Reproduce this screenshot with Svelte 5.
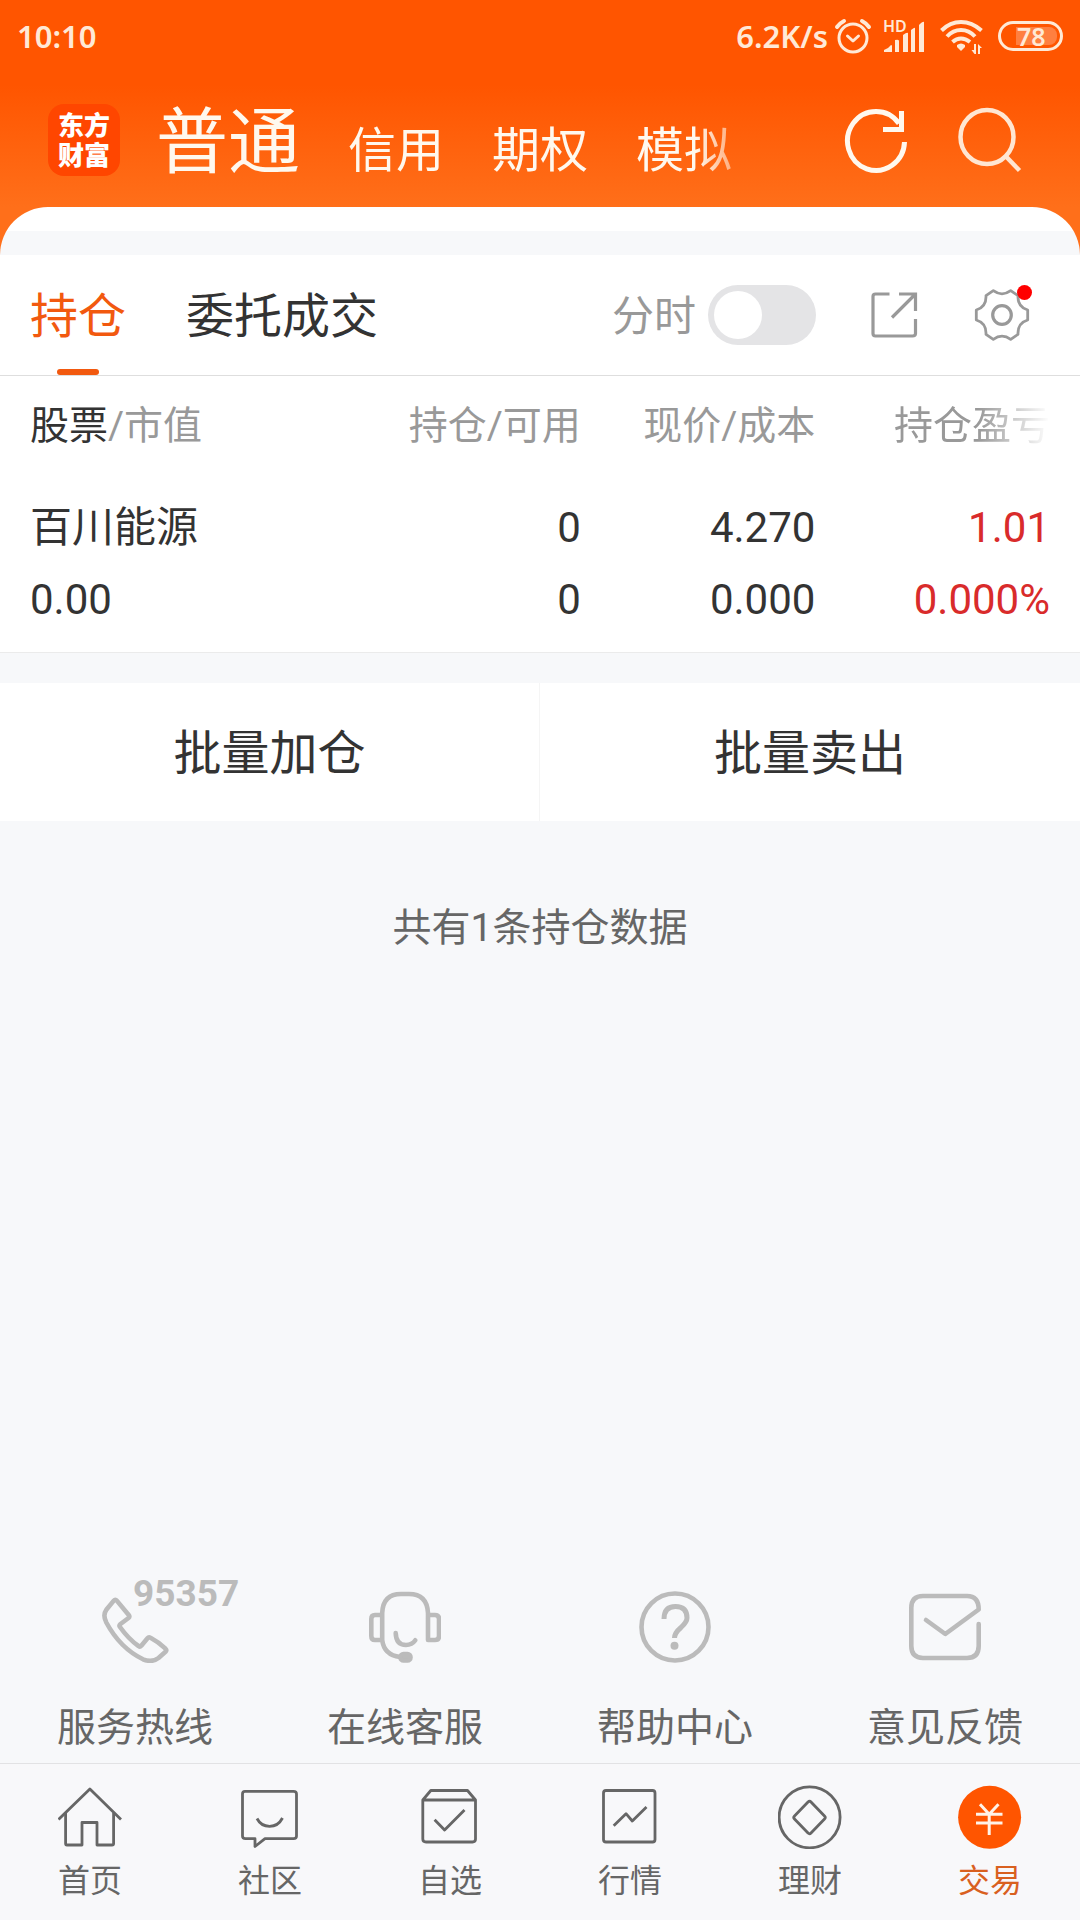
<script lang="ts">
	const accounts = ['普通', '信用', '期权', '模拟'];

	const holdings = [
		{
			name: '百川能源',
			value: '0.00',
			amount: '0',
			available: '0',
			price: '4.270',
			cost: '0.000',
			profit: '1.01',
			ratio: '0.000%'
		}
	];

	const services = [
		{ id: 'hotline', label: '服务热线' },
		{ id: 'chat', label: '在线客服' },
		{ id: 'help', label: '帮助中心' },
		{ id: 'feedback', label: '意见反馈' }
	];

	const tabs = [
		{ id: 'home', label: '首页' },
		{ id: 'community', label: '社区' },
		{ id: 'watchlist', label: '自选' },
		{ id: 'market', label: '行情' },
		{ id: 'wealth', label: '理财' },
		{ id: 'trade', label: '交易' }
	];

	let account = $state('普通');
	let view = $state('持仓');
	let currentTab = $state('trade');
	let intraday = $state(false);
</script>

<div class="page">
	<div class="status-bar">
		<time>10:10</time>
		<div class="status-icons">
			<span class="speed">6.2K/s</span>
			<svg class="alarm" viewBox="0 0 40 40" aria-hidden="true">
				<g fill="none" stroke="currentColor" stroke-width="3" stroke-linecap="round">
					<circle cx="20" cy="22" r="14" />
					<path d="M14.500 20l5.500 5 5.500-5" stroke-linejoin="round" />
					<path d="M4 11q3-4 7-6M36 11q-3-4-7-6" stroke-width="4" />
				</g>
			</svg>
			<svg class="signal" viewBox="0 0 44 36" aria-hidden="true">
				<text x="0" y="14">HD</text>
				<path
					fill="currentColor"
					d="M1 32q4-1 7-5q1 0 1 1v6H1zM12 22q4-1 4 1v11h-4zM20 17q4-3 5-2v19h-5zM28 12q4-3 4-2v24h-4zM36 7q4-4 5-3v30h-5z"
				/>
			</svg>
			<svg class="wifi" viewBox="0 0 44 38" aria-hidden="true">
				<g fill="none" stroke="currentColor" stroke-width="4">
					<path d="M1.500 13.500Q10 5 21 5t20.500 8.500" />
					<path d="M7 19.500Q13 13 21 13t14 6.500" />
					<path d="M12.500 25Q16.500 21.500 21 21.500t9 3.500" />
				</g>
				<path fill="currentColor" d="M17 28q4-3 8 0v2l-4 4-4-4z" />
				<path fill="currentColor" d="M36 27v10h-1.500l-3-4h2.500v-6zM38 37V27l4 4h-2v6z" />
			</svg>
			<span class="battery"><span>78</span></span>
		</div>
	</div>

	<header>
		<div class="logo">东方财富</div>
		<nav class="accounts">
			{#each accounts as item}
				<button class:current={account === item} onclick={() => (account = item)}>{item}</button>
			{/each}
		</nav>
		<button class="refresh" aria-label="刷新">
			<svg viewBox="0 0 68 68" aria-hidden="true">
				<g fill="none" stroke="currentColor" stroke-width="5">
					<path d="M62.500 36A28.500 29.500 0 1 1 57 17.500" />
					<path d="M41 23.500h18.500V5" />
				</g>
			</svg>
		</button>
		<button class="search" aria-label="搜索">
			<svg viewBox="0 0 68 68" aria-hidden="true">
				<g fill="none" stroke="currentColor" stroke-width="4.500">
					<ellipse cx="31" cy="31" rx="26.500" ry="27" />
					<path d="M50 50.500l13.500 14" />
				</g>
			</svg>
		</button>
	</header>

	<main>
		<div class="toolbar">
			<div class="views">
				{#each ['持仓', '委托成交'] as item}
					<button class:current={view === item} onclick={() => (view = item)}>{item}</button>
				{/each}
			</div>
			<label class="intraday">
				<span>分时</span>
				<input type="checkbox" role="switch" bind:checked={intraday} />
			</label>
			<button class="share" aria-label="分享">
				<svg viewBox="0 0 48 48" aria-hidden="true">
					<g fill="none" stroke="currentColor" stroke-width="3.200">
						<path d="M19.500 3H5.500Q3 3 3 5.500v37Q3 45 5.500 45h37q3 0 3-2.500V28" />
						<path d="M29 3h16.500v17M45.500 3L22 26.500" />
					</g>
				</svg>
			</button>
			<button class="settings" aria-label="设置">
				<svg viewBox="0 0 56 56" aria-hidden="true">
					<g fill="none" stroke="currentColor" stroke-width="2.800" stroke-linejoin="round">
						<path
							d="M12 8.700L19.300 3.700Q28 10 36.700 3.700L44 8.700Q43.500 20 53.700 23V33Q43.500 36 44 47.300L36.700 52.300Q28 46 19.300 52.300L12 47.300Q12.500 36 2.300 33V23Q12.500 20 12 8.700z"
						/>
						<circle cx="28" cy="28" r="9.300" stroke-width="3.200" />
					</g>
				</svg>
				<i class="dot"></i>
			</button>
		</div>

		<table>
			<thead>
				<tr>
					<th scope="col"><b>股票</b>/市值</th>
					<th scope="col">持仓/可用</th>
					<th scope="col">现价/成本</th>
					<th scope="col" class="fade">持仓盈亏</th>
				</tr>
			</thead>
			<tbody>
				{#each holdings as row}
					<tr>
						<td>{row.name}<br />{row.value}</td>
						<td>{row.amount}<br />{row.available}</td>
						<td>{row.price}<br />{row.cost}</td>
						<td class="up">{row.profit}<br />{row.ratio}</td>
					</tr>
				{/each}
			</tbody>
		</table>

		<div class="batch">
			<button>批量加仓</button>
			<button>批量卖出</button>
		</div>

		<p class="summary">共有{holdings.length}条持仓数据</p>

		<div class="services">
			{#each services as service}
				<a href="#{service.id}">
					<span class="service-icon">
						<svg viewBox="0 0 72 72" aria-hidden="true">
							<g
								fill="none"
								stroke="currentColor"
								stroke-width="4.600"
								stroke-linecap="round"
								stroke-linejoin="round"
							>
								{#if service.id === 'hotline'}
									<path
										d="M14.800 9.600Q16.300 7.800 17.800 9.600L29.700 24Q31 25.700 29.500 27L21.500 33Q19.800 34.500 21 36Q29.500 48 39.500 55Q41 56.200 42.300 54.800L48.500 47.300Q49.700 45.800 51.500 46.800Q59.500 51 66.500 57.700Q68 59.300 66.500 60.800L59.500 67Q53 72 44 68.300Q21 57 7.300 31.500Q3.500 24 7.300 18.800z"
									/>
								{:else if service.id === 'chat'}
									<path
										d="M13.200 49V22Q14 3 32 3H40Q58 3 59 22V49H66Q70 49 70 45V28Q70 24 66 24H59M13.200 24H6Q2.300 24 2.300 28V45Q2.300 49 6 49H13.200Q15 64 31 66"
									/>
									<path d="M26.700 42Q27 54 37 54Q43 54 46.300 49.300" />
									<rect x="31.500" y="63" width="10" height="6.500" rx="3" fill="currentColor" />
								{:else if service.id === 'help'}
									<circle cx="36" cy="36" r="33.500" />
									<path
										d="M25 28Q25 15.500 36.500 15.500T48 27Q48 31 42 36.500Q35.500 42 35.500 47"
										stroke-width="5"
										stroke-linecap="butt"
									/>
									<circle cx="35.500" cy="54.700" r="4" fill="currentColor" stroke="none" />
								{:else}
									<path
										d="M69.700 33V55Q69.700 67 58 67H14Q2.300 67 2.300 55V17Q2.300 5 14 5H58Q69.700 5 69.700 18.500L36.300 43L17 29"
									/>
								{/if}
							</g>
						</svg>
						{#if service.id === 'hotline'}
							<em>95357</em>
						{/if}
					</span>
					{service.label}
				</a>
			{/each}
		</div>
	</main>

	<nav class="tab-bar">
		{#each tabs as tab}
			<button class:current={currentTab === tab.id} onclick={() => (currentTab = tab.id)}>
				<svg viewBox="0 0 64 64" aria-hidden="true">
					<g fill="none" stroke="currentColor" stroke-width="2.800" stroke-linejoin="round">
						{#if tab.id === 'home'}
							<path d="M.5 34.500L31.900 4L63 34.500" />
							<path d="M7.600 28V58.500Q7.600 60 9 60H24V37.500H39V60H54Q55.600 60 55.600 58.500V28" />
						{:else if tab.id === 'community'}
							<path
								d="M7 6.300H55.500Q58.500 6.300 58.500 9V51Q58.500 53.700 55.500 53.700H27L17 61.500V53.700H7.500Q4.500 53.700 4.500 51V9Q4.500 6.300 7 6.300z"
							/>
							<path d="M19 33.500Q23 41.300 31.600 41.300T44.500 33" />
						{:else if tab.id === 'watchlist'}
							<path
								d="M4.800 15L12.800 5.500H49.500L57.500 15V54Q57.500 57 54.500 57H8Q4.800 57 4.800 54zH57.500"
							/>
							<path d="M16.600 34.700L26.600 45L46.500 25" />
						{:else if tab.id === 'market'}
							<rect x="5.500" y="5.500" width="51.500" height="51.500" rx="2.500" />
							<path d="M15.700 40.700L28 28.700L34.300 36L48.500 22" />
						{:else if tab.id === 'wealth'}
							<circle cx="31.600" cy="32.300" r="30.500" />
							<path
								d="M30 17Q31.600 15.500 33 17L46.500 31Q48 32.500 46.500 34L33 48Q31.600 49.500 30 48L16.500 34Q15 32.500 16.500 31z"
							/>
						{:else}
							<circle cx="31.600" cy="32.300" r="31.500" fill="#ff5500" stroke="none" />
							<path
								stroke="#fff3e8"
								stroke-width="3"
								d="M22 19.300L31.200 29.300L40.500 19.300M31.200 29.300V50M18 29.300H44.500M18 38H44.500"
							/>
						{/if}
					</g>
				</svg>
				{tab.label}
			</button>
		{/each}
	</nav>
</div>

<style>
	:global(body) {
		margin: 0;
	}

	.page {
		display: flex;
		flex-direction: column;
		min-height: 100vh;
		background: linear-gradient(#ff5500 85px, #ff6f1a 207px);
		color: #333;
		font-family: Roboto, 'Noto Sans CJK SC', sans-serif;
		line-height: 1;
	}

	button {
		padding: 0;
		border: 0;
		background: none;
		color: inherit;
		font: inherit;
	}

	svg {
		display: block;
	}

	.status-bar {
		display: flex;
		align-items: center;
		justify-content: space-between;
		height: 72px;
		padding: 0 17px;
		color: #ffe9d6;
		font: 600 31px/1 'Noto Sans', sans-serif;
	}

	.status-icons {
		display: flex;
		align-items: center;
	}

	.speed {
		margin-right: 5px;
	}

	.alarm {
		width: 40px;
		height: 40px;
		margin-right: 10px;
	}

	.signal {
		width: 44px;
		height: 36px;
		margin-right: 13px;
		overflow: visible;
		& text {
			fill: currentColor;
			font: 600 16px 'Noto Sans', sans-serif;
		}
	}

	.wifi {
		width: 44px;
		height: 38px;
		margin-right: 14px;
	}

	.battery {
		box-sizing: border-box;
		width: 65px;
		height: 30px;
		padding: 3px 3px 3px 15px;
		border: 3px solid;
		border-radius: 15px;
		& span {
			display: block;
			padding-left: 1px;
			border-radius: 0 8px 8px 0;
			background: rgba(255, 255, 255, 0.25);
			font: 600 25px/18px 'Noto Sans', sans-serif;
		}
	}

	header {
		display: flex;
		align-items: center;
		height: 135px;
		padding: 0 56px 0 48px;
		color: #fff8ee;
	}

	.logo {
		box-sizing: border-box;
		width: 72px;
		height: 72px;
		padding: 5px 10px;
		border-radius: 16px;
		background: #ff4600;
		color: #fff;
		font: 900 26px/30px 'Noto Sans CJK SC', sans-serif;
	}

	.accounts {
		display: flex;
		flex: 1;
		align-items: baseline;
		gap: 48px;
		margin-left: 36px;
		padding-top: 14px;
		overflow: hidden;
		font-size: 48px;
		line-height: 88px;
		white-space: nowrap;
		mask-image: linear-gradient(to right, #000 540px, transparent 610px);
		& .current {
			font-size: 72px;
		}
	}

	.refresh,
	.search {
		width: 68px;
		height: 68px;
	}

	.search {
		margin-left: 46px;
		color: #ffe6d2;
	}

	main {
		display: flex;
		flex: 1;
		flex-direction: column;
		padding-top: 48px;
		border-radius: 48px 48px 0 0;
		background: linear-gradient(#fff 24px, #f7f8fa 24px);
	}

	.toolbar {
		display: flex;
		align-items: center;
		height: 120px;
		padding: 0 50px 0 30px;
		border-bottom: 1px solid #dedede;
		background: #fff;
		color: #999;
	}

	.views {
		display: flex;
		flex: 1;
		align-self: stretch;
		gap: 60px;
		color: #333;
		font-size: 48px;
		& button {
			position: relative;
			padding-top: 4px;
		}
		& .current {
			color: #f2590f;
		}
		& .current::after {
			position: absolute;
			bottom: 0;
			left: 50%;
			width: 42px;
			height: 6px;
			margin-left: -21px;
			border-radius: 3px;
			background: #f2590f;
			content: '';
		}
	}

	.intraday {
		display: flex;
		align-items: center;
		gap: 12px;
		font-size: 42px;
		& span {
			padding-top: 4px;
		}
		& input {
			width: 108px;
			height: 60px;
			margin: 0;
			padding: 6px;
			box-sizing: border-box;
			border-radius: 30px;
			background: #e4e4e6;
			appearance: none;
		}
		& input::before {
			display: block;
			width: 48px;
			height: 48px;
			border-radius: 50%;
			background: #fff;
			content: '';
		}
		& input:checked {
			background: #f2590f;
		}
		& input:checked::before {
			margin-left: auto;
		}
	}

	.share {
		width: 48px;
		height: 48px;
		margin-left: 54px;
	}

	.settings {
		position: relative;
		width: 56px;
		height: 56px;
		margin-left: 56px;
	}

	.dot {
		position: absolute;
		top: -2px;
		right: -2px;
		width: 15px;
		height: 15px;
		border-radius: 50%;
		background: #f00;
	}

	table {
		width: 100%;
		padding: 0 30px;
		border-bottom: 1px solid #ebebeb;
		border-spacing: 0;
		background: #fff;
		table-layout: fixed;
	}

	th,
	td {
		width: 23%;
		padding: 0;
		text-align: right;
		white-space: nowrap;
	}

	th:first-child,
	td:first-child {
		width: 31%;
		text-align: left;
	}

	th {
		box-sizing: border-box;
		height: 98px;
		padding-top: 2px;
		color: #999;
		font-size: 39px;
		font-weight: 400;
		& b {
			color: #333;
			font-weight: 400;
		}
	}

	.fade {
		mask-image: linear-gradient(to left, transparent, #000 72px);
	}

	td {
		padding: 18px 0 16px;
		font-size: 42px;
		line-height: 72px;
	}

	.up {
		color: #d92b2b;
	}

	.batch {
		display: grid;
		grid-template-columns: 1fr 1fr;
		margin-top: 30px;
		background: #fff;
		& button {
			height: 138px;
			padding-top: 4px;
			font-size: 48px;
		}
		& button:first-child {
			border-right: 1px solid #f5f5f5;
		}
	}

	.summary {
		margin: 73px 0;
		color: #666;
		font-size: 39px;
		line-height: 68px;
		text-align: center;
	}

	.services {
		display: grid;
		grid-template-columns: repeat(4, 1fr);
		margin-top: auto;
		padding-bottom: 7px;
		& a {
			display: flex;
			flex-direction: column;
			align-items: center;
			gap: 37px;
			color: #666;
			font-size: 39px;
			line-height: 56px;
			text-decoration: none;
		}
	}

	.service-icon {
		position: relative;
		width: 72px;
		height: 72px;
		color: #bbb;
		& em {
			position: absolute;
			top: -14px;
			left: 34px;
			font: 700 37px/34px Roboto, sans-serif;
		}
	}

	.tab-bar {
		display: grid;
		grid-template-columns: repeat(6, 1fr);
		border-top: 1px solid #e2e2e4;
		background: #f8f8fa;
		color: #666;
		font-size: 32px;
		line-height: 40px;
		& button {
			display: flex;
			flex-direction: column;
			align-items: center;
			gap: 12px;
			padding: 21px 0 19px;
		}
		& svg {
			width: 64px;
			height: 64px;
		}
		& .current {
			color: #d9601f;
		}
	}
</style>
